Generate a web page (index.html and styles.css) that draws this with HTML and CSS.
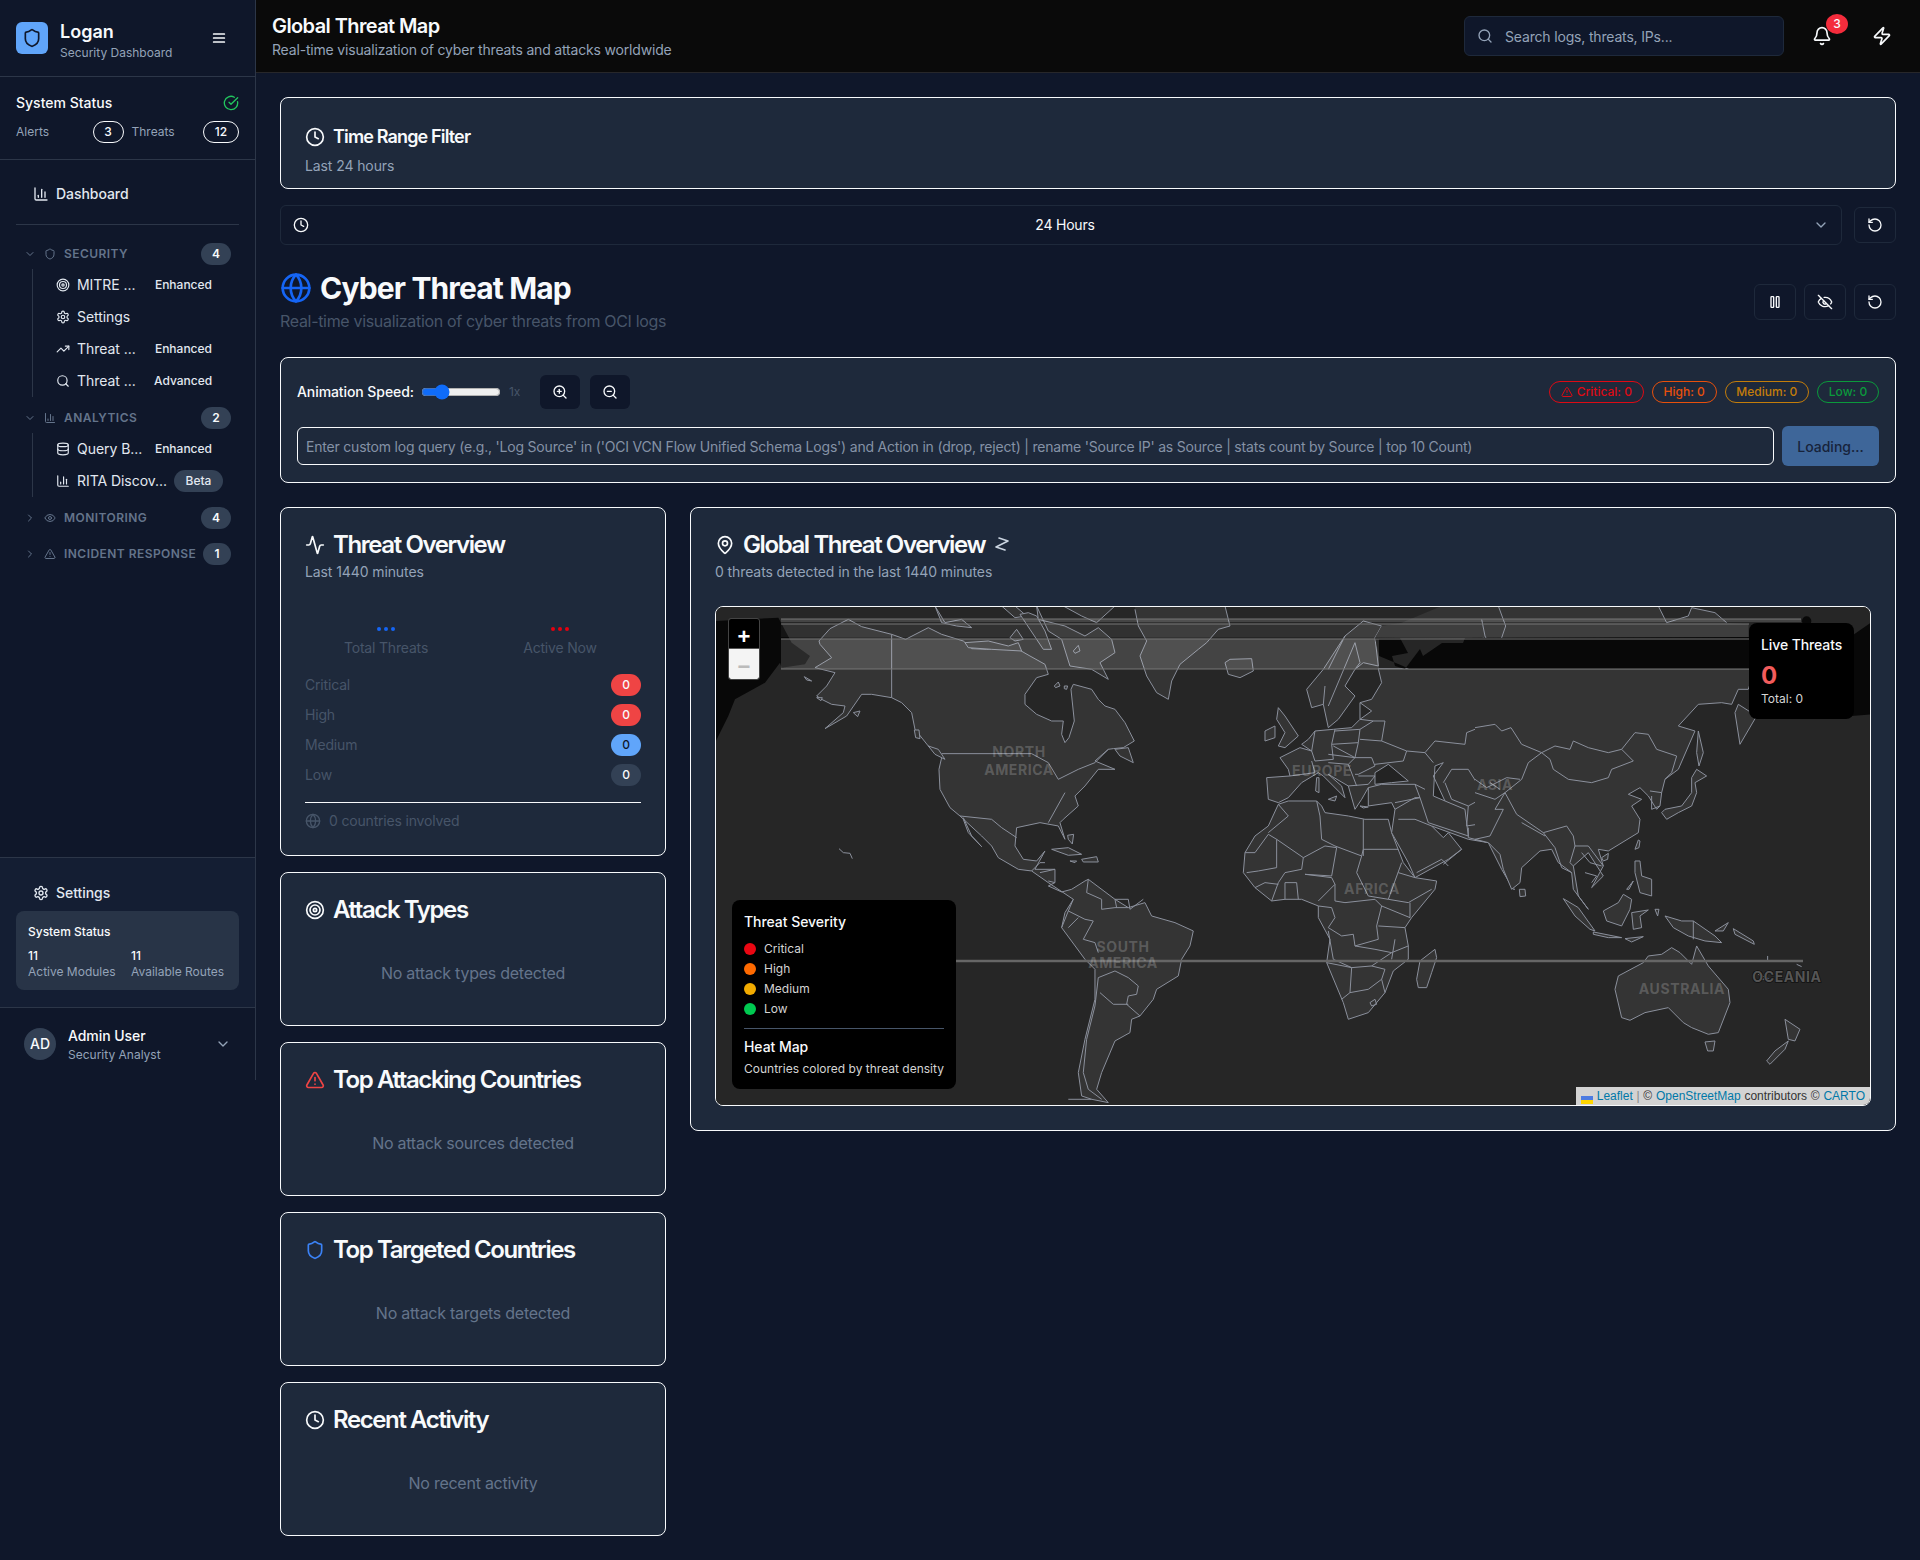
FILE: index.html
```html
<!DOCTYPE html>
<html lang="en">
<head>
  <meta charset="UTF-8" />
  <meta name="viewport" content="width=device-width, initial-scale=1.0" />
  <title>Global Threat Map</title>
  <link rel="stylesheet" href="styles.css">
</head>
<body>
  <svg class="sprite" aria-hidden="true">
    <symbol id="i-shield" viewBox="0 0 24 24"><path d="M20 13c0 5-3.5 7.5-7.66 8.95a1 1 0 0 1-.67-.01C7.5 20.5 4 18 4 13V6a1 1 0 0 1 1-1c2 0 4.5-1.2 6.24-2.72a1.17 1.17 0 0 1 1.52 0C14.51 3.81 17 5 19 5a1 1 0 0 1 1 1z"/></symbol>
    <symbol id="i-menu" viewBox="0 0 24 24"><path d="M4 6h16M4 12h16M4 18h16"/></symbol>
    <symbol id="i-check" viewBox="0 0 24 24"><path d="M21.801 10A10 10 0 1 1 17 3.335"/><path d="m9 11 3 3L22 4"/></symbol>
    <symbol id="i-chart" viewBox="0 0 24 24"><path d="M3 3v16a2 2 0 0 0 2 2h16"/><path d="M18 17V9"/><path d="M13 17V5"/><path d="M8 17v-3"/></symbol>
    <symbol id="i-down" viewBox="0 0 24 24"><path d="m6 9 6 6 6-6"/></symbol>
    <symbol id="i-right" viewBox="0 0 24 24"><path d="m9 18 6-6-6-6"/></symbol>
    <symbol id="i-target" viewBox="0 0 24 24"><circle cx="12" cy="12" r="10"/><circle cx="12" cy="12" r="6"/><circle cx="12" cy="12" r="2"/></symbol>
    <symbol id="i-gear" viewBox="0 0 24 24"><path d="M12.22 2h-.44a2 2 0 0 0-2 2v.18a2 2 0 0 1-1 1.73l-.43.25a2 2 0 0 1-2 0l-.15-.08a2 2 0 0 0-2.73.73l-.22.38a2 2 0 0 0 .73 2.73l.15.1a2 2 0 0 1 1 1.72v.51a2 2 0 0 1-1 1.74l-.15.09a2 2 0 0 0-.73 2.73l.22.38a2 2 0 0 0 2.73.73l.15-.08a2 2 0 0 1 2 0l.43.25a2 2 0 0 1 1 1.73V20a2 2 0 0 0 2 2h.44a2 2 0 0 0 2-2v-.18a2 2 0 0 1 1-1.73l.43-.25a2 2 0 0 1 2 0l.15.08a2 2 0 0 0 2.73-.73l.22-.39a2 2 0 0 0-.73-2.73l-.15-.08a2 2 0 0 1-1-1.74v-.5a2 2 0 0 1 1-1.74l.15-.09a2 2 0 0 0 .73-2.73l-.22-.38a2 2 0 0 0-2.73-.73l-.15.08a2 2 0 0 1-2 0l-.43-.25a2 2 0 0 1-1-1.73V4a2 2 0 0 0-2-2z"/><circle cx="12" cy="12" r="3"/></symbol>
    <symbol id="i-trend" viewBox="0 0 24 24"><path d="M22 7 13.5 15.5l-5-5L2 17"/><path d="M16 7h6v6"/></symbol>
    <symbol id="i-search" viewBox="0 0 24 24"><circle cx="11" cy="11" r="8"/><path d="m21 21-4.3-4.3"/></symbol>
    <symbol id="i-db" viewBox="0 0 24 24"><ellipse cx="12" cy="5" rx="9" ry="3"/><path d="M3 5v14a9 3 0 0 0 18 0V5"/><path d="M3 12a9 3 0 0 0 18 0"/></symbol>
    <symbol id="i-eye" viewBox="0 0 24 24"><path d="M2.062 12.348a1 1 0 0 1 0-.696 10.75 10.75 0 0 1 19.876 0 1 1 0 0 1 0 .696 10.75 10.75 0 0 1-19.876 0"/><circle cx="12" cy="12" r="3"/></symbol>
    <symbol id="i-alert" viewBox="0 0 24 24"><path d="m21.73 18-8-14a2 2 0 0 0-3.48 0l-8 14A2 2 0 0 0 4 21h16a2 2 0 0 0 1.73-3"/><path d="M12 9v4"/><path d="M12 17h.01"/></symbol>
    <symbol id="i-bell" viewBox="0 0 24 24"><path d="M10.268 21a2 2 0 0 0 3.464 0"/><path d="M3.262 15.326A1 1 0 0 0 4 17h16a1 1 0 0 0 .74-1.673C19.41 13.956 18 12.499 18 8A6 6 0 0 0 6 8c0 4.499-1.411 5.956-2.738 7.326"/></symbol>
    <symbol id="i-zap" viewBox="0 0 24 24"><path d="M4 14a1 1 0 0 1-.78-1.63l9.9-10.2a.5.5 0 0 1 .86.46l-1.92 6.02A1 1 0 0 0 13 10h7a1 1 0 0 1 .78 1.63l-9.9 10.2a.5.5 0 0 1-.86-.46l1.92-6.02A1 1 0 0 0 11 14z"/></symbol>
    <symbol id="i-clock" viewBox="0 0 24 24"><circle cx="12" cy="12" r="10"/><path d="M12 6v6l4 2"/></symbol>
    <symbol id="i-reset" viewBox="0 0 24 24"><path d="M3 12a9 9 0 1 0 9-9 9.75 9.75 0 0 0-6.74 2.74L3 8"/><path d="M3 3v5h5"/></symbol>
    <symbol id="i-globe" viewBox="0 0 24 24"><circle cx="12" cy="12" r="10"/><path d="M12 2a14.5 14.5 0 0 0 0 20 14.5 14.5 0 0 0 0-20"/><path d="M2 12h20"/></symbol>
    <symbol id="i-pause" viewBox="0 0 24 24"><rect x="14" y="4" width="4" height="16" rx="1"/><rect x="6" y="4" width="4" height="16" rx="1"/></symbol>
    <symbol id="i-eyeoff" viewBox="0 0 24 24"><path d="M10.733 5.076a10.744 10.744 0 0 1 11.205 6.575 1 1 0 0 1 0 .696 10.747 10.747 0 0 1-1.444 2.49"/><path d="M14.084 14.158a3 3 0 0 1-4.242-4.242"/><path d="M17.479 17.499a10.75 10.75 0 0 1-15.417-5.151 1 1 0 0 1 0-.696 10.75 10.75 0 0 1 4.446-5.143"/><path d="m2 2 20 20"/></symbol>
    <symbol id="i-zoomin" viewBox="0 0 24 24"><circle cx="11" cy="11" r="8"/><path d="m21 21-4.35-4.35"/><path d="M11 8v6"/><path d="M8 11h6"/></symbol>
    <symbol id="i-zoomout" viewBox="0 0 24 24"><circle cx="11" cy="11" r="8"/><path d="m21 21-4.35-4.35"/><path d="M8 11h6"/></symbol>
    <symbol id="i-activity" viewBox="0 0 24 24"><path d="M22 12h-2.48a2 2 0 0 0-1.93 1.46l-2.35 8.36a.25.25 0 0 1-.48 0L9.24 2.18a.25.25 0 0 0-.48 0l-2.35 8.36A2 2 0 0 1 4.49 12H2"/></symbol>
    <symbol id="i-pin" viewBox="0 0 24 24"><path d="M20 10c0 4.993-5.539 10.193-7.399 11.799a1 1 0 0 1-1.202 0C9.539 20.193 4 14.993 4 10a8 8 0 0 1 16 0"/><circle cx="12" cy="10" r="3"/></symbol>
    <symbol id="i-zig" viewBox="0 0 14 14"><path d="M4 1 13 4 1 10 10 13"/></symbol>
  </svg>

  <div class="layout">
    <aside class="sidebar">
      <div class="brand">
        <div class="brand-logo"><svg class="icon ic-20"><use href="#i-shield"/></svg></div>
        <div class="brand-text">
          <div class="brand-name">Logan</div>
          <div class="brand-sub">Security Dashboard</div>
        </div>
        <svg class="icon ic-16 thick"><use href="#i-menu"/></svg>
      </div>

      <div class="status">
        <div class="status-top">
          <span>System Status</span>
          <svg class="icon ic-16 green"><use href="#i-check"/></svg>
        </div>
        <div class="status-row">
          <div class="status-cell"><span class="muted">Alerts</span><span class="count count-a">3</span></div>
          <div class="status-cell"><span class="muted">Threats</span><span class="count count-b">12</span></div>
        </div>
      </div>

      <nav class="nav">
        <div class="nav-main">
          <svg class="icon ic-16"><use href="#i-chart"/></svg>
          <span>Dashboard</span>
        </div>
        <div class="nav-rule"></div>

        <div class="group">
          <svg class="icon ic-12 dim"><use href="#i-down"/></svg>
          <svg class="icon ic-12 dim"><use href="#i-shield"/></svg>
          <span class="group-name">SECURITY</span>
          <span class="num">4</span>
        </div>
        <div class="subnav">
          <div class="item"><svg class="icon ic-14"><use href="#i-target"/></svg><span class="item-name">MITRE ...</span><span class="tag">Enhanced</span></div>
          <div class="item"><svg class="icon ic-14"><use href="#i-gear"/></svg><span class="item-name">Settings</span></div>
          <div class="item"><svg class="icon ic-14"><use href="#i-trend"/></svg><span class="item-name">Threat ...</span><span class="tag">Enhanced</span></div>
          <div class="item"><svg class="icon ic-14"><use href="#i-search"/></svg><span class="item-name">Threat ...</span><span class="tag">Advanced</span></div>
        </div>

        <div class="group group-gap">
          <svg class="icon ic-12 dim"><use href="#i-down"/></svg>
          <svg class="icon ic-12 dim"><use href="#i-chart"/></svg>
          <span class="group-name">ANALYTICS</span>
          <span class="num">2</span>
        </div>
        <div class="subnav">
          <div class="item"><svg class="icon ic-14"><use href="#i-db"/></svg><span class="item-name">Query B...</span><span class="tag">Enhanced</span></div>
          <div class="item"><svg class="icon ic-14"><use href="#i-chart"/></svg><span class="item-name">RITA Discov...</span><span class="tag tag-pill">Beta</span></div>
        </div>

        <div class="group group-gap">
          <svg class="icon ic-12 dim"><use href="#i-right"/></svg>
          <svg class="icon ic-12 dim"><use href="#i-eye"/></svg>
          <span class="group-name">MONITORING</span>
          <span class="num">4</span>
        </div>
        <div class="group group-gap2">
          <svg class="icon ic-12 dim"><use href="#i-right"/></svg>
          <svg class="icon ic-12 dim"><use href="#i-alert"/></svg>
          <span class="group-name">INCIDENT RESPONSE</span>
          <span class="num num-small">1</span>
        </div>
      </nav>

      <div class="side-bottom">
        <div class="nav-main">
          <svg class="icon ic-16"><use href="#i-gear"/></svg>
          <span>Settings</span>
        </div>
        <div class="sys-box">
          <div class="sys-title">System Status</div>
          <div class="sys-grid">
            <div><div class="sys-num">11</div><div class="sys-label">Active Modules</div></div>
            <div><div class="sys-num">11</div><div class="sys-label">Available Routes</div></div>
          </div>
        </div>
      </div>

      <div class="user">
        <div class="avatar">AD</div>
        <div class="user-text">
          <div class="user-name">Admin User</div>
          <div class="user-role">Security Analyst</div>
        </div>
        <svg class="icon ic-16 grey"><use href="#i-down"/></svg>
      </div>
    </aside>

    <div class="content">
      <header class="topbar">
        <div class="topbar-title">
          <h1>Global Threat Map</h1>
          <p>Real-time visualization of cyber threats and attacks worldwide</p>
        </div>
        <div class="search">
          <svg class="icon ic-16 grey"><use href="#i-search"/></svg>
          <input type="text" placeholder="Search logs, threats, IPs...">
        </div>
        <div class="bell">
          <svg class="icon ic-20"><use href="#i-bell"/></svg>
          <span class="bell-badge">3</span>
        </div>
        <svg class="icon ic-20 bolt"><use href="#i-zap"/></svg>
      </header>

      <main class="main">
        <section class="card time-card">
          <div class="card-title title-sm"><svg class="icon ic-20"><use href="#i-clock"/></svg>Time Range Filter</div>
          <div class="card-sub">Last 24 hours</div>
        </section>

        <div class="range-row">
          <div class="range-select">
            <svg class="icon ic-16"><use href="#i-clock"/></svg>
            <span class="range-value">24 Hours</span>
            <svg class="icon ic-16 grey"><use href="#i-down"/></svg>
          </div>
          <button class="icon-btn"><svg class="icon ic-16"><use href="#i-reset"/></svg></button>
        </div>

        <div class="page-head">
          <div>
            <h2 class="page-title"><svg class="icon globe"><use href="#i-globe"/></svg>Cyber Threat Map</h2>
            <p class="page-sub">Real-time visualization of cyber threats from OCI logs</p>
          </div>
          <div class="page-actions">
            <button class="icon-btn"><svg class="icon ic-16"><use href="#i-pause"/></svg></button>
            <button class="icon-btn"><svg class="icon ic-16"><use href="#i-eyeoff"/></svg></button>
            <button class="icon-btn"><svg class="icon ic-16"><use href="#i-reset"/></svg></button>
          </div>
        </div>

        <section class="card controls">
          <div class="controls-top">
            <label class="speed-label">Animation Speed:</label>
            <input class="speed" type="range" min="0" max="100" value="20">
            <span class="speed-val">1x</span>
            <button class="zoom-btn"><svg class="icon ic-16"><use href="#i-zoomin"/></svg></button>
            <button class="zoom-btn"><svg class="icon ic-16"><use href="#i-zoomout"/></svg></button>
            <div class="sev-list">
              <span class="sev sev-critical"><svg class="icon ic-12"><use href="#i-alert"/></svg>Critical: 0</span>
              <span class="sev sev-high">High: 0</span>
              <span class="sev sev-medium">Medium: 0</span>
              <span class="sev sev-low">Low: 0</span>
            </div>
          </div>
          <div class="query-row">
            <input class="query" type="text" placeholder="Enter custom log query (e.g., 'Log Source' in ('OCI VCN Flow Unified Schema Logs') and Action in (drop, reject) | rename 'Source IP' as Source | stats count by Source | top 10 Count)">
            <button class="query-btn">Loading...</button>
          </div>
        </section>

        <div class="grid">
          <div class="col-left">
            <section class="card panel">
              <div class="card-title"><svg class="icon ic-20"><use href="#i-activity"/></svg>Threat Overview</div>
              <div class="card-sub">Last 1440 minutes</div>
              <div class="totals">
                <div class="total">
                  <div class="dots dots-blue"><i></i><i></i><i></i></div>
                  <div class="dim-text">Total Threats</div>
                </div>
                <div class="total">
                  <div class="dots dots-red"><i></i><i></i><i></i></div>
                  <div class="dim-text">Active Now</div>
                </div>
              </div>
              <div class="sev-rows">
                <div class="sev-row"><span class="dim-text">Critical</span><span class="score score-red">0</span></div>
                <div class="sev-row"><span class="dim-text">High</span><span class="score score-red">0</span></div>
                <div class="sev-row"><span class="dim-text">Medium</span><span class="score score-blue">0</span></div>
                <div class="sev-row"><span class="dim-text">Low</span><span class="score score-grey">0</span></div>
              </div>
              <div class="countries dim-text"><svg class="icon ic-16"><use href="#i-globe"/></svg>0 countries involved</div>
            </section>

            <section class="card panel panel-empty">
              <div class="card-title"><svg class="icon ic-20"><use href="#i-target"/></svg>Attack Types</div>
              <div class="empty">No attack types detected</div>
            </section>
            <section class="card panel panel-empty">
              <div class="card-title"><svg class="icon ic-20 red"><use href="#i-alert"/></svg>Top Attacking Countries</div>
              <div class="empty">No attack sources detected</div>
            </section>
            <section class="card panel panel-empty">
              <div class="card-title"><svg class="icon ic-20 blue"><use href="#i-shield"/></svg>Top Targeted Countries</div>
              <div class="empty">No attack targets detected</div>
            </section>
            <section class="card panel panel-empty">
              <div class="card-title"><svg class="icon ic-20"><use href="#i-clock"/></svg>Recent Activity</div>
              <div class="empty">No recent activity</div>
            </section>
          </div>

          <section class="card panel map-card">
            <div class="card-title"><svg class="icon ic-20"><use href="#i-pin"/></svg>Global Threat Overview<svg class="icon ic-14 zz"><use href="#i-zig"/></svg></div>
            <div class="card-sub">0 threats detected in the last 1440 minutes</div>

            <div class="map">
              <svg class="world" viewBox="0 0 1156 500" width="1156" height="500">
                <rect class="ocean" width="1156" height="500"/>
                <!-- dark polar tiles -->
                <g transform="scale(.3333)">
                  <path class="polar" d="M0,45 L190,35 L230,110 L285,150 L270,175 L200,185 L195,170 L150,230 L60,280 L40,330 L0,410Z"/>
                </g>
                <g transform="translate(760,0) scale(.3333)">
                  <path class="polar" d="M1188,50 L1130,90 L1130,330 L1188,325Z"/>
                  <circle class="polar" cx="995" cy="45" r="14"/>
                </g>

                <!-- americas -->
                <g transform="scale(.3333)">
                  <path class="land" d="M312,105 L345,68 L400,40 L440,62 L530,85 L572,100 L640,65 L680,85 L745,105 L770,128 L815,130 L870,125 L910,130 L945,150 L990,175 L1000,205 L965,215 L930,265 L930,295 L965,325 L1010,345 L1045,345 L1040,385 L1050,410 L1062,395 L1078,345 L1068,250 L1075,235 L1130,250 L1150,280 L1170,300 L1200,310 L1230,350 L1258,405 L1225,425 L1195,428 L1180,430 L1140,465 L1200,490 L1150,490 L1110,540 L1080,570 L1090,600 L1045,640 L1035,650 L1050,700 L1030,660 L975,650 L905,665 L900,720 L925,760 L965,765 L990,735 L960,790 L1020,790 L1020,830 L1000,840 L1040,858 L1070,850 L1110,825 L1120,820 L1200,880 L1240,905 L1290,890 L1310,930 L1380,950 L1435,975 L1425,1020 L1400,1060 L1390,1110 L1325,1150 L1315,1180 L1275,1230 L1250,1240 L1245,1280 L1200,1305 L1160,1400 L1145,1450 L1180,1490 L1130,1480 L1100,1470 L1090,1400 L1110,1300 L1140,1180 L1140,1090 L1110,1060 L1040,965 L1050,920 L1075,880 L1000,830 L950,795 L910,790 L850,755 L830,720 L800,690 L735,630 L705,605 L675,550 L672,490 L680,455 L640,420 L600,370 L590,320 L560,290 L530,275 L470,265 L440,265 L395,330 L330,368 L385,320 L390,300 L350,295 L320,280 L305,270 L335,240 L360,200 L300,185 L350,155 L315,115Z"/>
                  <path class="bd" d="M530,85V275 M680,443 H950 L1000,470 L1030,520 L1090,490 L1140,470 L1180,430 M735,630 L830,640 L860,665 L905,695 M745,635 L770,690 L800,722 L760,680 L745,640 M950,795 L975,770 L990,770 M975,800 L1020,790 M1000,825 L1020,830 M1120,820 L1115,860 L1160,880 L1160,910 L1200,905 L1240,905 M1200,880 L1205,905 M1075,880 L1060,915 L1110,940 L1135,945 L1105,1000 L1140,1010 L1150,1040 M1060,915 L1040,965 M1060,965 L1090,935"/>
                  <path class="bd" d="M1150,1115 L1140,1200 L1115,1300 L1105,1400 L1120,1450 L1160,1480 M1150,1115 L1200,1095 L1240,1115 L1270,1140 L1265,1165 L1240,1170 L1235,1195 L1275,1230 M1200,880 L1240,880 L1245,910 L1285,880 M1240,1195 L1195,1195 L1155,1160"/>
                  <path class="bd" d="M1000,650 L1050,560 M1060,1480 L1130,1480"/>
                  <!-- arctic islands -->
                  <path class="land" d="M660,0 L690,50 L740,40 L770,65 L725,60 L680,50Z"/>
                  <path class="land" d="M750,110 L820,105 L880,120 L910,110 L920,135 L830,130 L760,125Z"/>
                  <path class="land" d="M860,0 L900,35 L935,30 L900,0Z"/>
                  <path class="land" d="M885,95 L905,70 L925,100 L900,105Z"/>
                  <path class="land" d="M915,25 L945,70 L985,130 L1010,130 L990,75 L965,30 L940,20Z"/>
                  <path class="land" d="M965,0 L970,40 L1050,60 L1110,90 L1150,65 L1190,100 L1200,140 L1155,170 L1180,220 L1130,190 L1065,180 L1040,100 L1000,75Z"/>
                  <path class="land" d="M1045,0 L1100,30 L1145,50 L1200,0Z"/>
                  <path class="land" d="M1075,135 L1090,118 L1095,135 L1080,142Z"/>
                  <path class="land" d="M1018,240 L1030,228 L1035,240 L1022,245Z"/>
                  <path class="land" d="M1048,240 L1058,240 L1055,250 L1048,248Z"/>
                  <path class="land" d="M1200,430 L1240,425 L1255,470 L1215,450Z"/>
                  <path class="land" d="M268,212 L290,225 L275,222Z"/>
                  <path class="land" d="M305,275 L322,275 L318,284Z"/>
                  <path class="land" d="M415,320 L435,315 L428,332Z"/>
                  <path class="land" d="M598,372 L612,372 L615,398 L602,395Z"/>
                  <path class="land" d="M640,420 L670,430 L690,460 L660,445Z"/>
                  <path class="land" d="M1010,730 L1060,725 L1100,745 L1060,748Z"/>
                  <path class="land" d="M1100,760 L1145,752 L1150,768 L1105,768Z"/>
                  <path class="land" d="M1065,765 L1085,765 L1080,770Z"/>
                  <path class="land" d="M1058,688 L1076,685 L1072,714 L1060,700Z"/>
                  <path class="bd" d="M372,728 L385,740 L405,742 L412,758"/>
                </g>

                <!-- greenland, europe, africa, western asia -->
                <g transform="translate(400,0) scale(.3333)">
                  <path class="land" d="M60,10 L70,60 L95,105 L75,150 L95,210 L125,260 L160,280 L170,225 L195,175 L250,130 L275,110 L310,70 L345,60 L330,0 L60,0"/>
                  <path class="land" d="M330,170 L345,160 L410,158 L415,195 L375,215 L340,205Z"/>
                  <path class="land" d="M490,595 L520,585 L605,585 L620,600 L630,620 L700,630 L750,640 L820,640 L830,680 L865,770 L900,815 L965,825 L960,850 L890,935 L870,965 L880,1020 L880,1060 L835,1095 L810,1160 L760,1220 L700,1240 L685,1190 L635,1070 L645,1000 L610,935 L610,900 L560,880 L510,880 L470,885 L420,845 L385,800 L390,740 L420,690 L460,660Z"/>
                  <path class="land" d="M960,1030 L965,1055 L950,1100 L935,1145 L910,1145 L905,1120 L915,1065Z"/>
                  <path class="land" d="M490,305 L510,330 L550,390 L510,425 L490,420 L510,380 L485,340Z"/>
                  <path class="land" d="M450,375 L480,360 L480,395 L450,405Z"/>
                  <path class="land" d="M605,515 L612,515 L612,560 L602,555Z"/>
                  <path class="land" d="M640,580 L665,570 L660,585Z"/>
                  <path class="land" d="M735,600 L760,603 L745,606Z"/>
                  <path class="land" d="M575,250 L590,305 L625,295 L640,365 L670,340 L720,270 L690,240 L720,190 L745,170 L790,180 L780,95 L800,60 L745,45 L690,90 L625,190Z"/>
                  <path class="land" d="M1200,188 L790,188 L800,230 L770,280 L735,290 L770,315 L735,340 L710,365 L655,370 L600,375 L580,400 L560,415 L590,435 L555,425 L495,455 L520,490 L525,510 L455,515 L460,580 L490,590 L520,575 L560,530 L610,500 L625,510 L690,575 L680,540 L640,505 L700,540 L720,610 L740,580 L760,545 L760,600 L830,590 L840,610 L830,680 L880,770 L900,815 L1000,760 L1040,730 L1000,680 L985,695 L950,660 L1060,700 L1120,710 L1160,790 L1195,850 L1200,850"/>
                  <path class="land land-top" d="M780,95 L800,60 L860,50 L980,0 L1200,0 L1200,100Z"/>
                  <path class="sea" d="M780,500 L820,475 L880,525 L830,530 L780,535Z"/>
                  <path class="sea" d="M960,480 L985,470 L955,510 L990,585 L955,570Z"/>
                  <path class="bd" d="M460,680 L520,630 L490,595 M605,585 L615,630 L620,700 L660,720 L740,750 L745,730 M745,640 V750 M745,730 H850 M740,750 L725,800 L760,870 L820,880 L860,770 M390,740 H420 L460,685 L485,700 L485,785 L430,795 L395,800 M485,700 L565,755 L560,790 L510,800 L490,830 M565,755 L630,720 L665,725 L650,810 L570,805 M570,805 L650,815 L660,835 L610,885 M660,885 L690,890 L780,880 L800,900 L785,960 L790,1000 L720,1020 L715,985 L680,990 L640,965 M640,975 L655,1060 L710,1085 M720,1020 L780,1030 L830,1040 L770,1080 L710,1085 M635,1070 L710,1085 L705,1160 L680,1180 M705,1160 L760,1150 L800,1120 L810,1160 M830,1040 L880,1020 M800,1120 L810,1090 L770,1080 M790,960 L870,965 M820,880 L880,890 L950,850 M850,800 L900,815 M800,900 L885,935 M885,890 V935 M510,880 V830 H545 L550,880 M490,830 L470,885 M420,845 L450,830 L490,835 M660,885 L660,835"/>
                  <path class="bd" d="M765,1190 L780,1180 L785,1195 L770,1200Z M830,1060 L840,1000 M610,900 L650,905 L660,935 L640,965"/>
                  <path class="bd" d="M600,375 L590,435 L600,465 L655,460 L650,415 L660,370 M660,375 L735,370 L730,410 L650,415 M735,290 L735,340 M735,400 L800,405 L875,435 L865,465 L780,475 M800,405 L810,345 L775,345 L735,370 M720,455 L770,455 L780,480 L730,505 L720,505 M640,445 L720,455 L700,475 L640,470 M730,510 L780,510 L760,535 L700,540 M525,510 L600,500 L590,465 M760,545 L800,535 L900,535 L915,575 L840,590 M700,475 L725,540 M655,420 L720,455 M730,410 L720,455 M735,340 L775,345 M640,190 L690,90 M640,300 L720,110 L735,170 L720,190 M625,295 L630,240"/>
                  <path class="bd" d="M875,435 L930,440 L960,405 L1050,415 L1055,380 L1125,352 L1165,380 L1200,365 M930,440 L955,470 M985,530 L1010,490 L1060,490 L1110,570 L1200,540 M990,530 L1010,580 L1060,600 L1115,570 M915,575 L940,650 L1060,690 L1050,610 L990,585 M1060,600 L1055,660 L1120,650 L1170,590 L1200,580 M1060,665 L1060,695 L1120,710 L1130,680 L1170,640 L1200,620 M850,640 L900,640 L950,660 M840,610 L900,575 L915,575 M905,800 L980,760 L1000,780 M985,775 L1040,730 M900,535 L930,550"/>
                </g>

                <!-- eastern asia, oceania -->
                <g transform="translate(760,0) scale(.3333)">
                  <path class="land" d="M0,700 L40,710 L75,745 L85,790 L110,850 L135,830 L140,785 L195,735 L230,730 L250,770 L290,800 L295,850 L340,910 L310,870 L295,780 L340,740 L385,810 L350,845 L385,780 L370,730 L400,735 L490,680 L495,640 L470,600 L500,580 L460,565 L495,545 L520,570 L545,610 L555,600 L560,560 L570,520 L610,490 L660,375 L610,360 L670,295 L740,290 L770,295 L790,250 L820,250 L840,188 L0,188"/>
                  <path class="land land-top" d="M0,0 H550 L575,50 L640,30 L650,5 L720,20 L755,50 L820,55 L820,100 H0Z"/>
                  <path class="land" d="M780,320 L790,295 L845,330 L795,415Z"/>
                  <path class="land" d="M670,375 L685,440 L672,480 L665,440Z"/>
                  <path class="land" d="M560,620 L575,640 L610,620 L650,600 L665,560 L660,530 L695,510 L665,490 L650,515 L650,560 L620,600 L570,610Z"/>
                  <path class="land" d="M480,730 L490,702 L495,705 L492,725Z"/>
                  <path class="land" d="M380,755 L400,742 L398,760 L385,765Z"/>
                  <path class="land" d="M133,850 L150,850 L152,870 L135,872Z"/>
                  <path class="land" d="M480,765 L495,765 L500,810 L530,820 L530,870 L495,860 L480,800Z"/>
                  <path class="land" d="M455,850 L475,825 L462,850Z"/>
                  <path class="land" d="M385,915 L430,890 L445,865 L470,880 L465,910 L440,960 L395,945Z"/>
                  <path class="land" d="M265,878 L310,905 L360,975 L345,970 L300,930Z"/>
                  <path class="land" d="M355,978 L440,995 L400,995 L355,985Z"/>
                  <path class="land" d="M470,920 L520,912 L495,930 L500,965 L475,970Z"/>
                  <path class="land" d="M450,998 L505,992 L470,1008Z"/>
                  <path class="land" d="M570,930 L620,945 L655,945 L720,990 L740,1010 L690,1005 L640,990 L595,965Z"/>
                  <path class="land" d="M720,975 L760,950 L745,975Z"/>
                  <path class="land" d="M775,968 L835,1005 L838,1015 L780,985Z"/>
                  <path class="land" d="M540,910 L552,910 L548,930Z"/>
                  <path class="land" d="M420,1150 L430,1110 L505,1070 L520,1050 L560,1045 L590,1025 L615,1040 L650,1075 L665,1020 L700,1080 L760,1150 L765,1190 L730,1280 L700,1285 L650,1265 L625,1250 L580,1205 L510,1220 L465,1243 L440,1235Z"/>
                  <path class="land" d="M690,1308 L720,1305 L715,1335 L698,1335Z"/>
                  <path class="land" d="M930,1240 L975,1270 L960,1305 L940,1300Z"/>
                  <path class="land" d="M940,1305 L930,1330 L885,1375 L875,1365 L900,1335Z"/>
                  <path class="bd" d="M655,945 V1000 M200,440 L240,420 L285,430 L295,405 L340,425 L400,440 L440,430 L475,465 L410,490 L400,515 L350,530 L280,520 L235,490 L225,460 L200,440 M0,365 L60,355 L80,375 L108,365 L140,415 L200,440 L160,470 L140,520 L90,560 L125,625 L205,680 L275,660 L295,690 L300,720 L340,720 L385,780 M440,430 L480,380 L520,385 L545,430 L605,450 L590,500 L570,520 M90,560 L60,610 L85,610 L45,690 L0,700 M140,650 L210,690 M205,680 L240,725 L260,785 L290,800 M300,720 L285,770 L295,780 M320,740 L345,770 L380,780 M330,800 L365,810 L350,830 M525,555 L560,560 M530,570 L530,610 L555,600 M0,520 L35,545 L95,515 L135,520 M0,560 L60,580 L90,560 M45,530 L75,550"/>
                  <path class="bd" d="M550,0 L575,50 L640,30 L650,5 L720,20 L755,50 M20,40 L30,90 L45,120 L25,95 M70,0 L92,60 L75,110 L90,120 L65,160 L45,150 M878,1050 V1065 M965,1075 L980,1082 M850,1105 L880,1118 L860,1120"/>
                </g>

                <!-- black arctic band across siberia -->
                <path class="polar" d="M660,32 L685,32 L693,47 L677,50 L680,60 L690,63 L705,43 L708,50 L727,37 L748,37 L750,32 L1034,31 L1034,63 L694,63 L688,60 L664,50Z"/>
                <path class="band" d="M66,33 H664 L664,63 H66Z"/>
                <path class="band" d="M66,13 H1086 V16 H66Z"/>
                <path class="band band-faint" d="M66,18 H1034 V31 H66Z"/>
                <path class="rule" d="M66,13 H1086 M66,18 H1034 M66,33 H1034 M66,63 H1034"/>
                <path class="rule rule-thick" d="M100,355 H1088"/>

                <text class="lbl" x="304" y="151">NORTH</text>
                <text class="lbl" x="304" y="169">AMERICA</text>
                <text class="lbl" x="607" y="170">EUROPE</text>
                <text class="lbl" x="657" y="288">AFRICA</text>
                <text class="lbl" x="780" y="184">ASIA</text>
                <text class="lbl" x="408" y="346">SOUTH</text>
                <text class="lbl" x="408" y="362">AMERICA</text>
                <text class="lbl" x="967" y="388">AUSTRALIA</text>
                <text class="lbl lbl-dark" x="1072" y="376">OCEANIA</text>
              </svg>

              <div class="zoom-ctl">
                <span class="zoom-plus">+</span>
                <span class="zoom-minus">&minus;</span>
              </div>

              <div class="live">
                <div class="live-title">Live Threats</div>
                <div class="live-num">0</div>
                <div class="live-total">Total: 0</div>
              </div>

              <div class="legend">
                <div class="legend-title">Threat Severity</div>
                <div class="legend-row"><i class="dot dot-critical"></i>Critical</div>
                <div class="legend-row"><i class="dot dot-high"></i>High</div>
                <div class="legend-row"><i class="dot dot-medium"></i>Medium</div>
                <div class="legend-row"><i class="dot dot-low"></i>Low</div>
                <div class="legend-rule"></div>
                <div class="legend-title">Heat Map</div>
                <div class="legend-note">Countries colored by threat density</div>
              </div>

              <div class="attrib"><span class="flag"><i></i><i></i></span><a>Leaflet</a> <span class="pipe">|</span> © <a>OpenStreetMap</a> contributors © <a>CARTO</a></div>
            </div>
          </section>
        </div>
      </main>
    </div>
  </div>
</body>
</html>
```
FILE: styles.css
```css
* {
  box-sizing: border-box;
}
html, body {
  margin: 0;
  background: #0f172a;
}
body {
  font-family: Inter, "Liberation Sans", sans-serif;
  font-size: 14px;
  line-height: 20px;
  color: #f8fafc;
  height: 1560px;
  overflow: hidden;
}
.sprite {
  display: none;
}
.icon {
  fill: none;
  stroke: currentColor;
  stroke-width: 2;
  stroke-linecap: round;
  stroke-linejoin: round;
  flex: none;
}
.ic-12 { width: 12px; height: 12px; }
.ic-14 { width: 14px; height: 14px; }
.ic-16 { width: 16px; height: 16px; }
.ic-20 { width: 20px; height: 20px; }
.thick { stroke-width: 2.6; }
.green { color: #22c55e; }
.dim { color: #64748b; }
.grey { color: #94a3b8; }
.red { color: #ef4444; }
.blue { color: #3b82f6; }
.muted { color: #94a3b8; font-size: 12px; }

.layout {
  display: flex;
  align-items: flex-start;
}

/* sidebar */
.sidebar {
  width: 256px;
  height: 1080px;
  flex: none;
  display: flex;
  flex-direction: column;
  border-right: 1px solid #2c3648;
}
.brand {
  height: 77px;
  padding: 0 28px 0 16px;
  display: flex;
  align-items: center;
  border-bottom: 1px solid #2c3648;
}
.brand-logo {
  width: 32px;
  height: 32px;
  border-radius: 6px;
  background: #60a5fa;
  color: #0f172a;
  display: flex;
  align-items: center;
  justify-content: center;
  margin-right: 12px;
}
.brand-text {
  flex: 1;
  margin-top: 5px;
}
.brand-name {
  font-size: 18px;
  line-height: 25px;
  font-weight: 600;
}
.brand-sub {
  font-size: 12px;
  line-height: 18px;
  color: #94a3b8;
}
.status {
  height: 83px;
  padding: 16px 16px 0;
  border-bottom: 1px solid #2c3648;
}
.status-top {
  display: flex;
  justify-content: space-between;
  align-items: center;
  font-weight: 500;
}
.status-row {
  display: grid;
  grid-template-columns: 1fr 1fr;
  gap: 8px;
  margin-top: 8px;
}
.status-cell {
  display: flex;
  justify-content: space-between;
  align-items: center;
  height: 22px;
}
.count {
  border: 1px solid #f8fafc;
  border-radius: 999px;
  height: 22px;
  font-size: 12px;
  font-weight: 500;
  line-height: 20px;
  text-align: center;
}
.count-a { width: 31px; }
.count-b { width: 36px; }
.nav {
  flex: 1;
  padding: 16px 0 0;
}
.nav-main {
  height: 36px;
  padding-left: 33px;
  display: flex;
  align-items: center;
  gap: 7px;
  color: #e2e8f0;
  font-weight: 500;
  letter-spacing: -.05px;
}
.nav-rule {
  height: 1px;
  background: #2c3648;
  margin: 12px 16px 18px;
}
.group {
  height: 22px;
  padding: 0 24px 0 24px;
  display: flex;
  align-items: center;
}
.group .icon + .icon { margin-left: 8px; }
.group-gap { margin-top: 10px; }
.group-gap2 { margin-top: 14px; }
.group-name {
  flex: 1;
  margin-left: 8px;
  font-size: 12px;
  font-weight: 600;
  letter-spacing: .45px;
  color: #64748b;
  white-space: nowrap;
}
.num {
  width: 30px;
  height: 22px;
  border-radius: 999px;
  background: #334155;
  font-size: 12px;
  font-weight: 600;
  line-height: 22px;
  text-align: center;
}
.num-small { width: 28px; }
.subnav {
  margin: 4px 0 0 32px;
  border-left: 1px solid #2c3648;
  padding: 0 0 0 23px;
}
.item {
  height: 32px;
  display: flex;
  align-items: center;
  color: #e2e8f0;
}
.item-name {
  margin-left: 7px;
  flex: 1;
  white-space: nowrap;
  letter-spacing: -.05px;
}
.tag {
  width: 74px;
  margin-right: 27px;
  font-size: 12px;
  font-weight: 500;
  text-align: right;
  padding-right: 16px;
}
.tag-pill {
  width: 49px;
  height: 22px;
  margin-right: 32px;
  padding: 0;
  border-radius: 999px;
  background: #334155;
  line-height: 22px;
  text-align: center;
}
.side-bottom {
  height: 150px;
  border-top: 1px solid #2c3648;
  background: #141e33;
  padding: 17px 16px 0;
}
.side-bottom .nav-main {
  padding-left: 17px;
}
.sys-box {
  height: 79px;
  border-radius: 8px;
  background: #283447;
  padding: 11px 12px 0;
  font-size: 12px;
}
.sys-title {
  font-weight: 500;
  line-height: 20px;
}
.sys-grid {
  display: grid;
  grid-template-columns: 103px 1fr;
  margin-top: 6px;
  line-height: 16px;
}
.sys-num { font-weight: 500; }
.sys-label { color: #94a3b8; white-space: nowrap; }
.user {
  height: 73px;
  border-top: 1px solid #2c3648;
  padding: 0 24px;
  display: flex;
  align-items: center;
}
.avatar {
  width: 32px;
  height: 32px;
  border-radius: 50%;
  background: #334155;
  font-size: 14px;
  font-weight: 500;
  line-height: 32px;
  text-align: center;
  margin-right: 12px;
}
.user-text { flex: 1; }
.user-name { font-weight: 500; line-height: 20px; letter-spacing: -.05px; }
.user-role { font-size: 12px; line-height: 17px; color: #94a3b8; }

/* top bar */
.content {
  flex: 1;
  min-width: 0;
}
.topbar {
  height: 73px;
  background: #0a0a0a;
  border-bottom: 1px solid #27272a;
  padding: 0 28px 0 16px;
  display: flex;
  align-items: center;
}
.topbar-title { flex: 1; }
.topbar-title h1 {
  margin: 0;
  font-size: 20px;
  line-height: 28px;
  font-weight: 600;
  letter-spacing: -.6px;
}
.topbar-title p {
  margin: 0;
  color: #94a3b8;
  line-height: 20px;
  letter-spacing: -.18px;
}
.search {
  width: 320px;
  height: 40px;
  margin-right: 28px;
  background: #0f172a;
  border: 1px solid #1e293b;
  border-radius: 6px;
  padding: 0 12px;
  display: flex;
  align-items: center;
  gap: 12px;
}
.search input {
  flex: 1;
  background: none;
  border: 0;
  outline: 0;
  color: #f8fafc;
  font: 14px Inter, sans-serif;
  letter-spacing: -.17px;
  padding: 0;
}
.search input::placeholder { color: #94a3b8; opacity: 1; }
.bell {
  position: relative;
  width: 20px;
  height: 20px;
  margin-right: 40px;
}
.bell-badge {
  position: absolute;
  top: -12px;
  left: 14px;
  width: 22px;
  height: 20px;
  border-radius: 50%;
  background: #f42c3c;
  font-size: 12px;
  line-height: 20px;
  font-weight: 500;
  text-align: center;
}

/* main column */
.main {
  padding: 24px;
}
.card {
  background: #1e293b;
  border: 1px solid #f8fafc;
  border-radius: 8px;
}
.time-card {
  height: 92px;
  padding: 25px 24px 0;
}
.card-title {
  display: flex;
  align-items: center;
  gap: 8px;
  font-size: 24px;
  line-height: 32px;
  font-weight: 600;
  letter-spacing: -1.4px;
}
.title-sm {
  font-size: 18px;
  line-height: 28px;
  letter-spacing: -.85px;
}
.card-sub {
  color: #94a3b8;
  line-height: 20px;
  margin-top: 5px;
  letter-spacing: -.1px;
}
.panel .card-sub { margin-top: 1px; }
.range-row {
  display: flex;
  align-items: center;
  gap: 12px;
  margin-top: 16px;
}
.range-select {
  flex: 1;
  height: 40px;
  display: flex;
  align-items: center;
  padding: 0 12px;
  border: 1px solid #1e293b;
  border-radius: 6px;
}
.range-value {
  flex: 1;
  padding-left: 8px;
  text-align: center;
  letter-spacing: -.2px;
}
.icon-btn {
  width: 42px;
  height: 36px;
  padding: 0;
  background: #0f172a;
  border: 1px solid #1e293b;
  border-radius: 6px;
  color: #f8fafc;
  display: flex;
  align-items: center;
  justify-content: center;
}
.page-head {
  margin-top: 25px;
  display: flex;
  justify-content: space-between;
  align-items: center;
}
.page-title {
  margin: 0;
  display: flex;
  align-items: center;
  gap: 8px;
  font-size: 30px;
  line-height: 36px;
  font-weight: 700;
  letter-spacing: -.87px;
}
.globe {
  width: 32px;
  height: 32px;
  color: #1565f5;
}
.page-sub {
  margin: 3px 0 0;
  font-size: 16px;
  line-height: 24px;
  color: #475569;
  letter-spacing: -.32px;
}
.page-actions {
  display: flex;
  gap: 8px;
}
.controls {
  margin-top: 24px;
  height: 126px;
  padding: 17px 16px 0;
}
.controls-top {
  display: flex;
  align-items: center;
  height: 34px;
}
.speed-label {
  font-weight: 500;
  margin-right: 7px;
  letter-spacing: -.08px;
}
.speed {
  width: 80px;
  margin: 0;
  accent-color: #0f6cfa;
}
.speed-val {
  margin-left: 8px;
  color: #475569;
  font-size: 12px;
  width: 31px;
}
.zoom-btn {
  width: 40px;
  height: 34px;
  padding: 0;
  margin-right: 10px;
  background: #0f172a;
  border: 0;
  border-radius: 6px;
  color: #f8fafc;
  display: flex;
  align-items: center;
  justify-content: center;
}
.sev-list {
  margin-left: auto;
  display: flex;
  gap: 8px;
}
.sev {
  height: 22px;
  padding: 0 10.8px;
  border: 1px solid currentColor;
  border-radius: 999px;
  font-size: 12px;
  line-height: 20px;
  font-weight: 500;
  display: flex;
  align-items: center;
  gap: 4px;
}
.sev-critical { color: #de0a14; }
.sev-high { color: #e8500c; }
.sev-medium { color: #c47d0a; }
.sev-low { color: #0b9a3c; }
.query-row {
  display: flex;
  align-items: center;
  gap: 8px;
  margin-top: 17px;
}
.query {
  flex: 1;
  height: 38px;
  background: #1e293b;
  border: 1px solid #f8fafc;
  border-radius: 6px;
  padding: 0 8px;
  font: 14px Inter, sans-serif;
  letter-spacing: -.2px;
  color: #f8fafc;
  outline: 0;
}
.query::placeholder { color: #8592a6; opacity: 1; }
.query-btn {
  width: 97px;
  height: 40px;
  background: #3e6699;
  border: 0;
  border-radius: 6px;
  font: 500 14px Inter, sans-serif;
  color: #17233b;
}

/* panels */
.grid {
  margin-top: 24px;
  display: grid;
  grid-template-columns: 386px 1fr;
  gap: 24px;
  align-items: start;
}
.col-left {
  display: flex;
  flex-direction: column;
  gap: 16px;
}
.panel {
  padding: 21px 24px 0;
}
.totals {
  display: grid;
  grid-template-columns: 1fr 1fr;
  gap: 12px;
  margin-top: 40px;
  text-align: center;
}
.dots {
  display: flex;
  justify-content: center;
  gap: 3px;
  height: 16px;
  padding-top: 5px;
}
.dots i {
  width: 4px;
  height: 4px;
  border-radius: 50%;
  background: currentColor;
}
.dots-blue { color: #1565f5; }
.dots-red { color: #e6000f; }
.dim-text {
  color: #475569;
  letter-spacing: -.18px;
}
.sev-rows { margin-top: 12px; }
.sev-row {
  height: 30px;
  display: flex;
  justify-content: space-between;
  align-items: center;
}
.score {
  width: 30px;
  height: 22px;
  border-radius: 999px;
  font-size: 12px;
  font-weight: 500;
  line-height: 22px;
  text-align: center;
}
.score-red { background: #ef4444; }
.score-blue { background: #60a5fa; color: #0f172a; }
.score-grey { background: #334155; }
.countries {
  margin-top: 12px;
  padding-top: 8px;
  border-top: 1px solid #f8fafc;
  display: flex;
  align-items: center;
  gap: 8px;
  height: 29px;
}
.col-left > .panel:first-child { height: 349px; }
.panel-empty { height: 154px; }
.empty {
  margin-top: 35px;
  font-size: 16px;
  line-height: 24px;
  color: #64748b;
  text-align: center;
  letter-spacing: -.25px;
}
.map-card {
  height: 624px;
}
.zz {
  margin-left: 2px;
  margin-top: -3px;
  color: #cbd5e1;
  stroke-width: 1.6;
}
.map {
  position: relative;
  width: 1156px;
  height: 500px;
  margin-top: 24px;
  border: 1px solid #f8fafc;
  border-radius: 8px;
  overflow: hidden;
  background: #262626;
}
.world {
  display: block;
  margin: -1px;
}
.ocean { fill: #262626; }
.polar { fill: #080808; }
.land {
  fill: #343434;
  stroke: #8b909c;
  stroke-width: 1;
  vector-effect: non-scaling-stroke;
}
.land-top { stroke: none; }
.sea {
  fill: #232323;
  stroke: #8b909c;
  stroke-width: 1;
  vector-effect: non-scaling-stroke;
}
.bd {
  fill: none;
  stroke: #8b909c;
  stroke-width: 1;
  vector-effect: non-scaling-stroke;
}
.band { fill: rgba(255, 255, 255, .14); }
.band-faint { fill: rgba(255, 255, 255, .05); }
.rule {
  fill: none;
  stroke: #777;
  stroke-width: 1;
}
.rule-thick {
  stroke-width: 2.5;
  stroke: #666;
}
.lbl {
  font: 700 14px Inter, sans-serif;
  letter-spacing: .6px;
  text-anchor: middle;
  fill: rgba(255, 255, 255, .2);
}
.lbl-dark {
  fill: #555;
  stroke: #111;
  stroke-width: 1.5px;
  paint-order: stroke;
}
.zoom-ctl {
  position: absolute;
  top: 12px;
  left: 13px;
  width: 30px;
  display: flex;
  flex-direction: column;
  border-radius: 2px;
  overflow: hidden;
  outline: 1px solid #444;
}
.zoom-ctl span {
  height: 30px;
  padding-top: 3px;
  font: 700 22px/30px "Liberation Sans", sans-serif;
  text-align: center;
}
.zoom-plus { background: #000; color: #fff; border-bottom: 1px solid #555; }
.zoom-minus { background: #f4f4f4; color: #bbb; }
.live {
  position: absolute;
  top: 16px;
  left: 1033px;
  width: 105px;
  height: 96px;
  padding: 12px;
  border-radius: 8px;
  background: #000;
}
.live-title {
  font-size: 14px;
  font-weight: 500;
  line-height: 20px;
  letter-spacing: -.1px;
  white-space: nowrap;
}
.live-num {
  margin-top: 5px;
  font-size: 24px;
  line-height: 32px;
  font-weight: 700;
  color: #f25c5c;
}
.live-total {
  margin-top: -1px;
  font-size: 12px;
  line-height: 16px;
  color: #d4d4d4;
}
.legend {
  position: absolute;
  left: 16px;
  top: 293px;
  width: 224px;
  height: 189px;
  padding: 13px 12px 0;
  border-radius: 8px;
  background: #000;
}
.legend-title {
  font-size: 14px;
  font-weight: 500;
  line-height: 18px;
  margin-bottom: 8px;
  letter-spacing: -.05px;
}
.legend-row {
  display: flex;
  align-items: center;
  gap: 8px;
  height: 20px;
  font-size: 12px;
  color: #d4d4d4;
}
.dot {
  width: 12px;
  height: 12px;
  border-radius: 50%;
}
.dot-critical { background: #ea0712; }
.dot-high { background: #ff6a00; }
.dot-medium { background: #f2ab00; }
.dot-low { background: #00c950; }
.legend-rule {
  height: 1px;
  background: #475569;
  margin: 9px 0;
}
.legend-note {
  font-size: 12px;
  line-height: 16px;
  color: #d4d4d4;
  white-space: nowrap;
  margin-top: -3px;
}
.attrib {
  position: absolute;
  right: 0;
  bottom: 0;
  height: 18px;
  padding: 0 5px;
  background: rgba(255, 255, 255, .8);
  font: 12px/18px "Liberation Sans", sans-serif;
  word-spacing: .4px;
  color: #333;
  white-space: nowrap;
}
.attrib a { color: #0078a8; }
.pipe { color: #888; }
.flag {
  display: inline-flex;
  flex-direction: column;
  width: 12px;
  height: 8px;
  margin-right: 4px;
  vertical-align: 0;
}
.flag i { flex: 1; background: #4c7be1; }
.flag i + i { background: #ffd500; }
```
